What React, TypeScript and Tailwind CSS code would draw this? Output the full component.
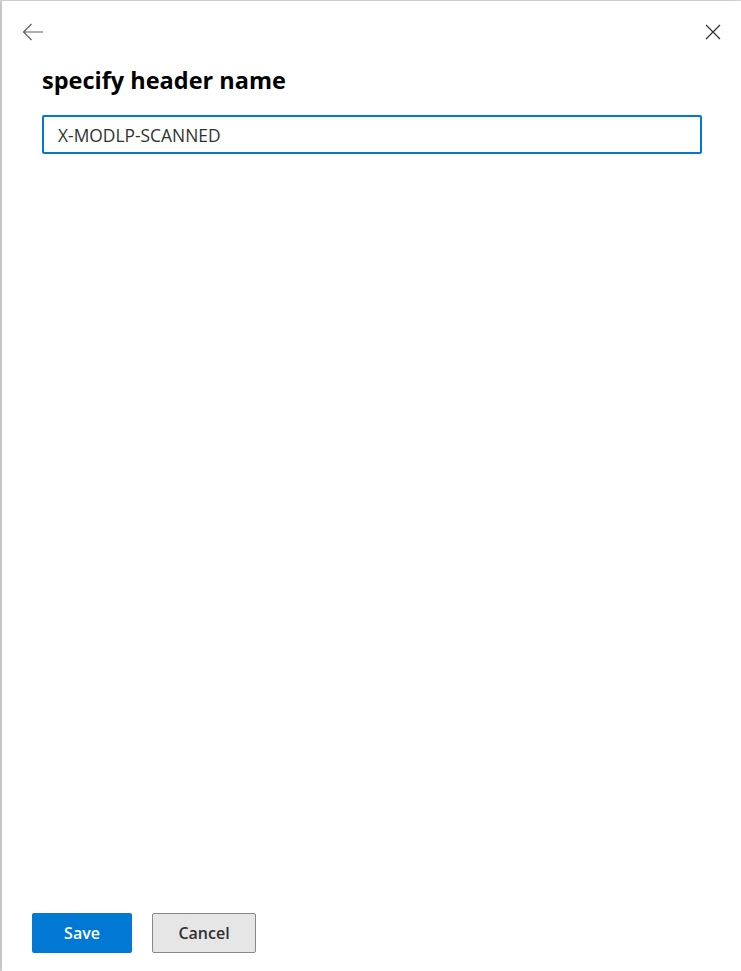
import { useState } from "react";

export default function App() {
  const [value, setValue] = useState("X-MODLP-SCANNED");

  return (
    <div
      className="h-[971px] w-[741px] bg-[#d9d9d9] pl-[2px] pt-[1px] overflow-hidden"
      style={{ fontFamily: '"Open Sans", "Noto Sans", "Liberation Sans", sans-serif' }}
    >
      <div className="flex h-full flex-col bg-white shadow-[-2px_0_6px_rgba(0,0,0,0.15)]">
        <div className="flex items-center justify-between pl-[20px] pr-[20px] pt-[22px]">
          <button className="text-[#605e5c]" aria-label="Back">
            <svg width="22" height="18" viewBox="0 0 22 18" fill="none" stroke="currentColor" strokeWidth="1.2">
              <path d="M21 9H1.5M9.5 1L1.5 9l8 8" />
            </svg>
          </button>
          <button className="text-[#323130]" aria-label="Close">
            <svg width="16" height="16" viewBox="0 0 16 16" fill="none" stroke="currentColor" strokeWidth="1.2">
              <path d="M1 1l14 14M15 1L1 15" />
            </svg>
          </button>
        </div>

        <div className="flex-1 px-[40px]">
          <h1 className="mt-[24px] text-[23.5px] font-bold leading-[30px] text-black">specify header name</h1>
          <input
            value={value}
            onChange={(e) => setValue(e.target.value)}
            className="mt-[20px] h-[39px] w-[660px] rounded-[2px] border-2 border-[#0078d4] px-[14px] text-[17.4px] text-[#323130] outline-none"
          />
        </div>

        <div className="flex gap-[20px] px-[30px] pb-[18px]">
          <button className="h-[40px] w-[100px] rounded-[2px] bg-[#0078d4] text-[16px] font-semibold text-white">
            Save
          </button>
          <button className="h-[40px] w-[104px] rounded-[2px] border border-[#8a8886] bg-[#e6e6e6] text-[16px] font-semibold text-[#323130]">
            Cancel
          </button>
        </div>
      </div>
    </div>
  );
}
